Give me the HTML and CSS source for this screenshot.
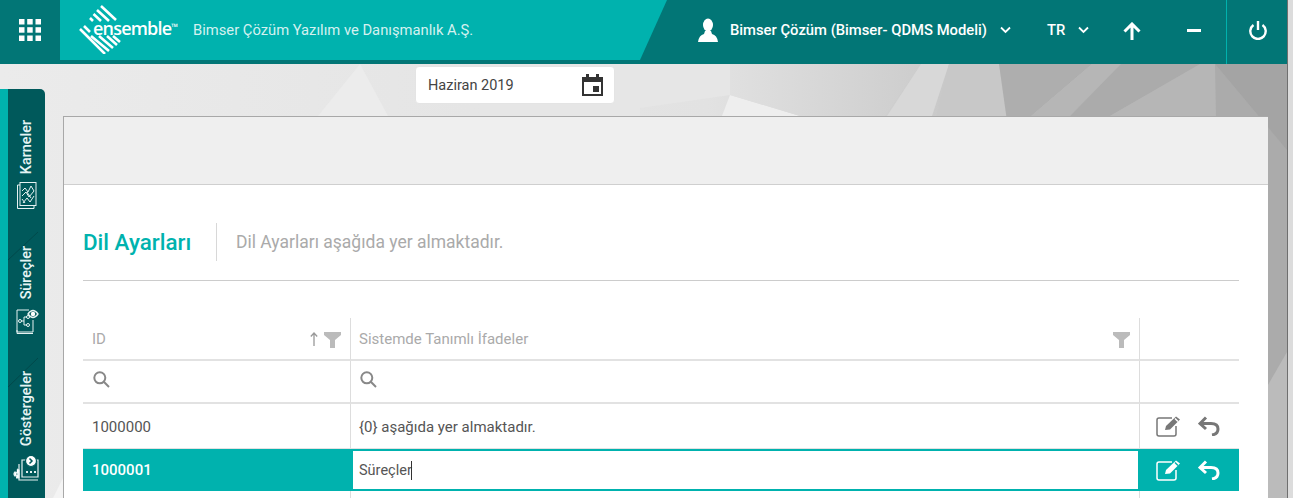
FILE: index.html
```html
<!DOCTYPE html>
<html lang="tr">
<head>
    <meta charset="UTF-8">
    <meta name="viewport" content="width=device-width, initial-scale=1.0">
    <title>Dil Ayarları</title>
    <link rel="stylesheet" href="styles.css">
</head>
<body>
<div class="page">
    <div class="main">
        <!-- Background -->
        <svg class="bg" width="1287" height="498" viewBox="0 0 1287 498" aria-hidden="true">
            <defs>
                <linearGradient id="bgGrad" x1="0" x2="1" y1="0" y2="0">
                    <stop offset="0" stop-color="#ebebeb"/>
                    <stop offset="0.55" stop-color="#e2e2e2"/>
                    <stop offset="1" stop-color="#a4a4a4"/>
                </linearGradient>
                <linearGradient id="midGrad" x1="0" x2="1" y1="0" y2="0">
                    <stop offset="0" stop-color="#e0e0e0"/>
                    <stop offset="1" stop-color="#cdcdcd"/>
                </linearGradient>
            </defs>
            <rect width="1287" height="498" fill="url(#bgGrad)"/>
            <polygon points="360,64 318,116 388,116" fill="#ececec"/>
            <polygon points="480,64 730,64 730,95 640,108 640,116 480,116" fill="#e6e6e6"/>
            <polygon points="730,95 800,116 722,116" fill="#eeeeee"/>
            <polygon points="730,64 921,64 885,116 800,116 730,95" fill="url(#midGrad)"/>
            <polygon points="921,64 949,64 932,116 887,116" fill="#d8d8d8"/>
            <polygon points="949,64 999,64 1009,135 932,135" fill="#c8c8c8"/>
            <polygon points="999,64 1092,64 1009,135" fill="#aeaeae"/>
            <polygon points="1092,64 1121,64 1070,116 1030,116 1009,135" fill="#b6b6b6"/>
            <polygon points="1121,64 1200,64 1110,116 1070,116" fill="#ababab"/>
            <polygon points="1200,64 1215,64 1223,116 1110,116" fill="#b6b6b6"/>
            <polygon points="1215,64 1287,64 1287,150" fill="#a4a4a4"/>
            <polygon points="1215,64 1287,150 1287,498 1223,498" fill="#ababab"/>
            <polygon points="1268,385 1287,352 1287,498 1268,498" fill="#bbbbbb"/>
            <polygon points="63,478 53,498 63,498" fill="#f4f4f4"/>
        </svg>

        <!-- Header -->
        <div class="header">
            <div class="apps-btn">
                <svg width="22" height="22" viewBox="0 0 22 22" fill="#fff">
                    <rect x="0" y="0" width="5.5" height="5.5"/><rect x="8.2" y="0" width="5.5" height="5.5"/><rect x="16.5" y="0" width="5.5" height="5.5"/>
                    <rect x="0" y="8.2" width="5.5" height="5.5"/><rect x="8.2" y="8.2" width="5.5" height="5.5"/><rect x="16.5" y="8.2" width="5.5" height="5.5"/>
                    <rect x="0" y="16.5" width="5.5" height="5.5"/><rect x="8.2" y="16.5" width="5.5" height="5.5"/><rect x="16.5" y="16.5" width="5.5" height="5.5"/>
                </svg>
            </div>
            <div class="brand">
                <div class="logo">
                    <svg class="logo-mark" width="62" height="54" viewBox="0 0 62 54" stroke="#fff" stroke-width="2.6" fill="none">
                        <path d="M22 6 L37 20M18 10 L30 21M14.500 14 L22 21M11 18 L14 21"/>
                        <path d="M1 29 L26 54M5 26 L11 32M12 36 L30 51M20 36 L34 48M28 36 L38 45M34 36 L41 42"/>
                    </svg>
                    <span class="logo-text">ensemble<sup>™</sup></span>
                </div>
                <div class="company">Bimser Çözüm Yazılım ve Danışmanlık A.Ş.</div>
            </div>
            <div class="actions">
                <svg class="user-icon" width="20" height="24" viewBox="0 0 20 24" fill="#fff">
                    <ellipse cx="10" cy="7" rx="5" ry="6.500"/>
                    <path d="M7 13 L13 13 L14 16 Q19 17 20 24 L0 24 Q1 17 6 16Z"/>
                </svg>
                <span class="user-name">Bimser Çözüm (Bimser- QDMS Modeli)</span>
                <svg class="chev chev-user" width="11" height="8" viewBox="0 0 11 8" fill="none" stroke="#fff" stroke-width="1.800"><path d="M1 1.500 L5.500 6 L10 1.500"/></svg>
                <span class="lang">TR</span>
                <svg class="chev chev-lang" width="11" height="8" viewBox="0 0 11 8" fill="none" stroke="#fff" stroke-width="1.800"><path d="M1 1.500 L5.500 6 L10 1.500"/></svg>
                <svg class="up-icon" width="18" height="18" viewBox="0 0 18 18" fill="none" stroke="#fff" stroke-width="3"><path d="M9 18 V2 M1.500 9.500 L9 2 L16.500 9.500"/></svg>
                <span class="minus"></span>
                <span class="divider"></span>
                <svg class="power-icon" width="18" height="19" viewBox="0 0 18 19" fill="none" stroke="#fff" stroke-width="2.400"><path d="M9 0 V9"/><path d="M4.500 4 A7.700 7.700 0 1 0 13.500 4"/></svg>
            </div>
        </div>

        <!-- Date picker -->
        <div class="date-row">
            <div class="date-box">
                <span>Haziran 2019</span>
                <svg width="21" height="22" viewBox="0 0 21 22" fill="#333">
                    <path d="M0 3 H4 V0 H7 V3 H14 V0 H17 V3 H21 V22 H0Z M2 8 V20 H19 V8Z" fill-rule="evenodd"/>
                    <rect x="11" y="12" width="6" height="6"/>
                </svg>
            </div>
        </div>

        <!-- Panel -->
        <div class="panel">
            <div class="panel-top"></div>
            <div class="panel-body">
                <div class="title-row">
                    <h1 class="title">Dil Ayarları</h1>
                    <div class="subtitle">Dil Ayarları aşağıda yer almaktadır.</div>
                </div>
                <table class="grid">
                    <colgroup>
                        <col class="col-id">
                        <col class="col-text">
                        <col class="col-cmd">
                    </colgroup>
                    <tr class="head">
                        <th>
                            <div class="head-cell">
                                <span>ID</span>
                                <svg class="sort-icon" width="8" height="14" viewBox="0 0 8 14" fill="none" stroke="#999" stroke-width="1.300"><path d="M4 14 V1 M0.800 4.500 L4 1 L7.200 4.500"/></svg>
                                <svg class="filter-icon" width="17" height="16" viewBox="0 0 17 16" fill="#bbb"><path d="M0 0 H17 V3 L11 8 V16 H6 V8 L0 3Z"/></svg>
                            </div>
                        </th>
                        <th>
                            <div class="head-cell">
                                <span>Sistemde Tanımlı İfadeler</span>
                                <svg class="filter-icon" width="17" height="16" viewBox="0 0 17 16" fill="#bbb"><path d="M0 0 H17 V3 L11 8 V16 H6 V8 L0 3Z"/></svg>
                            </div>
                        </th>
                        <th></th>
                    </tr>
                    <tr class="filter">
                        <td><svg width="17" height="17" viewBox="0 0 17 17" fill="none" stroke="#888" stroke-width="2"><circle cx="6.800" cy="6.800" r="5.500"/><path d="M10.800 10.800 L16 16"/></svg></td>
                        <td><svg width="17" height="17" viewBox="0 0 17 17" fill="none" stroke="#888" stroke-width="2"><circle cx="6.800" cy="6.800" r="5.500"/><path d="M10.800 10.800 L16 16"/></svg></td>
                        <td></td>
                    </tr>
                    <tr class="row">
                        <td>1000000</td>
                        <td>{0} aşağıda yer almaktadır.</td>
                        <td>
                            <div class="cmds">
                                <svg width="26" height="22" viewBox="0 0 26 22" fill="none" stroke="#777" stroke-width="1.500"><path d="M16 3 H3 Q1 3 1 5 V19 Q1 21 3 21 H18 Q20 21 20 19 V11"/><path d="M9 15 L10 11 L20 1.500 L24 4.500 L14 14.500Z" fill="#777" stroke="none"/><path d="M19 3.500 L22 6.500" stroke="#fff"/></svg>
                                <svg width="22" height="20" viewBox="0 0 22 20" fill="none" stroke="#777" stroke-width="3"><path d="M8 1.500 L2 7.500 L8 13"/><path d="M2 7.500 H13 Q20 7.500 20 13 Q20 18 14 19"/></svg>
                            </div>
                        </td>
                    </tr>
                    <tr class="row selected">
                        <td>1000001</td>
                        <td class="edit-cell"><div class="edit-box"><span>Süreçler</span><i class="caret"></i></div></td>
                        <td>
                            <div class="cmds">
                                <svg width="26" height="22" viewBox="0 0 26 22" fill="none" stroke="#fff" stroke-width="1.500"><path d="M16 3 H3 Q1 3 1 5 V19 Q1 21 3 21 H18 Q20 21 20 19 V11"/><path d="M9 15 L10 11 L20 1.500 L24 4.500 L14 14.500Z" fill="#fff" stroke="none"/><path d="M19 3.500 L22 6.500" stroke="#00b2ae"/></svg>
                                <svg width="22" height="20" viewBox="0 0 22 20" fill="none" stroke="#fff" stroke-width="3"><path d="M8 1.500 L2 7.500 L8 13"/><path d="M2 7.500 H13 Q20 7.500 20 13 Q20 18 14 19"/></svg>
                            </div>
                        </td>
                    </tr>
                    <tr class="row">
                        <td></td>
                        <td></td>
                        <td></td>
                    </tr>
                </table>
            </div>
        </div>

        <!-- Side tabs -->
        <div class="side">
            <svg class="side-lines" width="37" height="409" viewBox="0 0 37 409" stroke="#00494b" stroke-width="1" fill="none">
                <path d="M0 171 L30 143"/>
                <path d="M0 298 L30 269"/>
            </svg>
            <div class="side-item">
                <span class="side-label">Karneler</span>
                <svg width="20" height="27" viewBox="0 0 20 27" fill="none" stroke="#e6f2f2" stroke-width="1">
                    <rect x="3" y="0.500" width="16" height="23"/>
                    <path d="M3 3 H0.500 V26.500 H17 V24"/>
                    <path d="M5 9 L8 6 L11 10 L14 4 L17 9 M5 14 L9 10 L12 15 L17 9 M6 21 L10 16 L13 20 L17 14 M5 17 L8 21 M10 10 L14 16"/>
                </svg>
            </div>
            <div class="side-item">
                <span class="side-label">Süreçler</span>
                <svg width="24" height="27" viewBox="0 0 24 27" fill="none" stroke="#e6f2f2" stroke-width="1">
                    <path d="M14 3 H2 V25 H18 V13"/>
                    <path d="M2 23 V26.500 H18"/>
                    <path d="M6 14 H9 M9 10 V18 M9 10 H12 M9 18 H12"/>
                    <circle cx="5" cy="14" r="1.500"/><circle cx="13" cy="10" r="1.500"/><circle cx="13" cy="18" r="1.500"/>
                    <path d="M13 7 Q18 0 23 7 Q18 14 13 7Z" fill="#00595b" stroke-width="1.300"/>
                    <circle cx="18" cy="7" r="2.200" fill="#fff" stroke="none"/>
                </svg>
            </div>
            <div class="side-item">
                <span class="side-label">Göstergeler</span>
                <svg width="28" height="27" viewBox="0 0 28 27" fill="none" stroke="#e6f2f2" stroke-width="1.200">
                    <path d="M9 5 H25 V22 H9Z"/>
                    <path d="M6 9 V25 H25"/>
                    <path d="M2 17 Q0 19 2 21 L6 19Z M4 14 L6 15 V23 L3 23" fill="#fff"/>
                    <circle cx="18" cy="6" r="5.500" fill="#fff" stroke="#00595b"/>
                    <path d="M16.500 3.500 L19 6 L16.500 8.500" stroke="#00595b" stroke-width="1.500"/>
                    <path d="M13 17 H15 M17 17 H19 M21 17 H23" stroke-width="2"/>
                </svg>
            </div>
        </div>
    </div>
    <div class="strip"></div>
</div>
</body>
</html>
```

FILE: styles.css
```css
/* Global styles */
* {
    margin: 0;
    padding: 0;
    box-sizing: border-box;
}

html, body {
    height: 100%;
    overflow: hidden;
}

body {
    font-family: Roboto, "Liberation Sans", Arial, sans-serif;
    font-size: 14px;
    color: #555;
    background-color: #ddd;
}

.page {
    display: flex;
    height: 100vh;
}

.main {
    position: relative;
    flex: 1;
    overflow: hidden;
}

.bg {
    position: absolute;
    top: 0;
    left: 0;
}

.strip {
    width: 6px;
    background-color: #dcdcdc;
    border-left: 1px solid #6f6f6f;
}

/* Header styles */
.header {
    position: relative;
    display: flex;
    height: 64px;
    background-color: #027676;
    color: #fff;
}

.apps-btn {
    display: flex;
    align-items: center;
    justify-content: center;
    width: 60px;
    height: 60px;
}

.brand {
    display: flex;
    align-items: center;
    width: 607px;
    height: 60px;
    background-color: #00b2ae;
    clip-path: polygon(0 0, 100% 0, calc(100% - 27px) 100%, 0 100%);
}

.logo {
    position: relative;
    width: 133px;
    height: 60px;
}

.logo-mark {
    position: absolute;
    top: 0;
    left: 19px;
}

.logo-text {
    position: absolute;
    top: 18px;
    left: 33px;
    font-family: "Open Sans", Roboto, sans-serif;
    font-size: 18px;
    font-weight: 600;
    line-height: 20px;
    letter-spacing: -0.8px;
    color: #fff;
}

.logo-text sup {
    font-size: 9px;
    font-weight: 700;
    vertical-align: 5px;
    line-height: 0;
}

.company {
    font-size: 14.75px;
    color: #d5f1f0;
}

.actions {
    display: flex;
    flex: 1;
    align-items: center;
    padding-bottom: 4px;
}

.user-icon {
    margin-left: 31px;
}

.user-name {
    margin-left: 12px;
    font-size: 14.8px;
    font-weight: 500;
}

.chev-user {
    margin-left: 13px;
}

.lang {
    margin-left: 36px;
    font-size: 14.8px;
    font-weight: 500;
}

.chev-lang {
    margin-left: 13px;
}

.up-icon {
    margin: 2px 0 0 34px;
}

.minus {
    width: 14px;
    height: 3px;
    margin-left: 46px;
    background-color: #fff;
}

.divider {
    align-self: flex-start;
    width: 1px;
    height: 64px;
    margin-left: 25px;
    background-color: #00b2ae;
}

.power-icon {
    margin-left: 22px;
}

/* Date picker */
.date-row {
    position: relative;
    height: 52px;
    padding: 2px 0 0 415px;
}

.date-box {
    display: flex;
    align-items: center;
    justify-content: space-between;
    width: 200px;
    height: 38px;
    padding: 0 11px 0 12px;
    background-color: #fff;
    border: 1px solid #e4e4e4;
    border-radius: 4px;
    font-size: 14.5px;
    color: #444;
}

/* Panel styles */
.panel {
    position: relative;
    width: 1205px;
    height: 400px;
    margin-left: 63px;
    background-color: #fff;
    border-top: 1px solid #a8a8a8;
    border-left: 1px solid #a8a8a8;
}

.panel-top {
    height: 68px;
    background-color: #efefef;
    border-bottom: 1px solid #cfcfcf;
}

.panel-body {
    padding: 0 29px 0 19px;
}

.title-row {
    display: flex;
    align-items: center;
    height: 96px;
    padding: 38px 0 19px;
    margin-bottom: 37px;
    border-bottom: 1px solid #ccc;
}

.title {
    width: 134px;
    height: 38px;
    border-right: 1px solid #d8d8d8;
    font-size: 22.4px;
    font-weight: 500;
    line-height: 38px;
    color: #00b2ae;
}

.subtitle {
    margin-left: 19px;
    font-size: 17.5px;
    color: #aaa;
}

/* Table styles */
.grid {
    width: 1156px;
    table-layout: fixed;
    border-collapse: separate;
    border-spacing: 0;
}

.col-id {
    width: 268px;
}

.col-text {
    width: 789px;
}

.col-cmd {
    width: 99px;
}

.grid th, .grid td {
    padding: 0 0 0 9px;
    border-right: 1px solid #ddd;
    border-bottom: 2px solid #e2e2e2;
    font-size: 15px;
    font-weight: 400;
    text-align: left;
    vertical-align: middle;
}

.grid th:last-child, .grid td:last-child {
    padding: 0;
    border-right: none;
}

.grid td:nth-child(2), .grid th:nth-child(2) {
    padding-left: 8px;
}

.head th {
    height: 43px;
    color: #aaa;
}

.head-cell {
    display: flex;
    align-items: center;
    padding-right: 9px;
}

.head-cell span {
    flex: 1;
}

.sort-icon {
    margin-right: 6px;
}

.filter-icon {
    margin-top: 2px;
}

.filter td {
    height: 43px;
}

.filter svg {
    display: block;
    margin: 0 0 4px 1px;
}

.row td {
    height: 45px;
    padding-top: 1px;
    border-bottom: 1px solid #e2e2e2;
}

.cmds {
    display: flex;
    align-items: center;
    gap: 16px;
    padding-left: 16px;
}

.row.selected td {
    height: 42px;
    padding-top: 0;
    border-right: none;
    border-bottom: none;
    background-color: #00b2ae;
    color: #fff;
    font-weight: 500;
}

.row.selected td.edit-cell {
    padding: 2px 2px 2px 2px;
}

.edit-box {
    display: flex;
    align-items: center;
    height: 38px;
    padding-left: 6px;
    background-color: #fff;
    font-size: 14.5px;
    color: #555;
    font-weight: 400;
}

.caret {
    width: 1px;
    height: 19px;
    margin-left: -1px;
    background-color: #333;
}

/* Side tabs */
.side {
    position: absolute;
    top: 89px;
    left: 0;
    width: 45px;
    height: 409px;
    padding-top: 31px;
    background-color: #00595b;
    border-left: 8px solid #00b2ae;
    border-top-right-radius: 5px;
}

.side-lines {
    position: absolute;
    top: 0;
    left: 0;
}

.side-item {
    position: relative;
    display: flex;
    flex-direction: column;
    align-items: center;
    gap: 8px;
    margin-bottom: 37px;
}

.side-label {
    writing-mode: vertical-rl;
    transform: rotate(180deg);
    font-size: 14.4px;
    font-weight: 500;
    color: #e6f4f4;
}
```
